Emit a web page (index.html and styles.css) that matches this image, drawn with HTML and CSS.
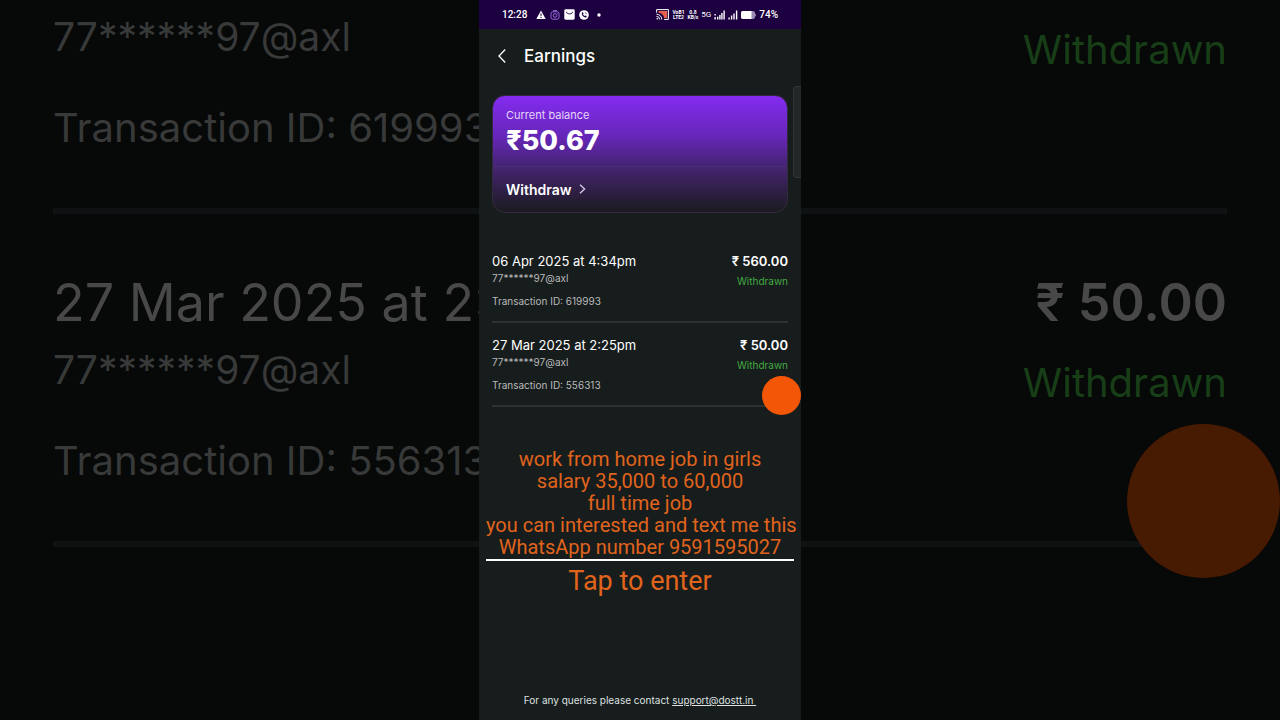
FILE: index.html
```html
<!DOCTYPE html>
<html lang="en">
<head>
  <meta charset="UTF-8">
  <meta name="viewport" content="width=device-width, initial-scale=1.0">
  <title>Earnings</title>
  <link rel="stylesheet" href="styles.css">
</head>
<body>
  <div class="backdrop" aria-hidden="true">
    <ul class="history history-large">
      <li class="entry">
        <div>
          <p class="date">06 Apr 2025 at 4:34pm</p>
          <p class="account">77******97@axl</p>
          <p class="txn">Transaction ID: 619993</p>
        </div>
        <div class="entry-right">
          <p class="sum">₹ 560.00</p>
          <p class="state">Withdrawn</p>
        </div>
      </li>
      <li class="entry">
        <div>
          <p class="date">27 Mar 2025 at 2:25pm</p>
          <p class="account">77******97@axl</p>
          <p class="txn">Transaction ID: 556313</p>
        </div>
        <div class="entry-right">
          <p class="sum">₹ 50.00</p>
          <p class="state">Withdrawn</p>
        </div>
      </li>
    </ul>
    <span class="bubble bubble-large"></span>
  </div>

  <div class="phone">
    <div class="statusbar">
      <span class="clock">12:28</span>
      <div class="status-left">
        <svg width="10" height="10" viewBox="0 0 10 10"><path d="M5 .6 9.700 9H.3z" fill="#fff"/><path d="M5 3.400v2.800M5 7v1" stroke="#1c0040" stroke-width="1"/></svg>
        <svg width="10" height="10" viewBox="0 0 10 10" fill="none" stroke="#9a6be0"><rect x="1" y="1.800" width="8" height="7.400" rx="1.800"/><circle cx="5" cy="5.500" r="1.800"/><path d="M3 .7h4M7.200 3.400h.6"/></svg>
        <svg width="11" height="11" viewBox="0 0 11 11"><rect x=".3" y=".3" width="10.400" height="10.400" rx="1.400" fill="#fff"/><path d="M2.400 2.800c.6 2.800 5.600 2.800 6.200 0" fill="none" stroke="#1c0040"/></svg>
        <svg width="10" height="10" viewBox="0 0 10 10"><circle cx="5" cy="5" r="4.800" fill="#fff"/><path d="M3 2.400c-.8 2.600 1.600 5.200 4.400 5l.2-1.400-1.400-.6-.8.6L4 4.600l.5-.8L4 2.300zM5.600 2.200c1.300.1 2.100.9 2.200 2.200" fill="#1c0040"/></svg>
        <svg width="4" height="4" viewBox="0 0 4 4"><circle cx="2" cy="2" r="1.700" fill="#fff"/></svg>
      </div>
      <div class="status-right">
        <svg width="13" height="11" viewBox="0 0 13 11"><path d="M2.600 2h8.600v7H8C8 6 5.500 4 2.600 4z" fill="#e8604c"/><path d="M.6 3.600V.6h11.800v9.800H8" fill="none" stroke="#fff"/><path d="M.5 5.200a5.300 5.300 0 0 1 5.300 5.300M.5 7.400a3.100 3.100 0 0 1 3.100 3.100" fill="none" stroke="#fff"/><circle cx="1.200" cy="9.800" r=".8" fill="#fff"/></svg>
        <span class="tiny">VoB1<br>LTE2</span>
        <span class="tiny">0.8<br>KB/s</span>
        <span class="net">5G</span>
        <svg width="11" height="10" viewBox="0 0 11 10" fill="#fff"><path d="M.4 4h1.400v1.500H.4zM.4 7h1.400v2.400H.4zM3 6.800h1.400v2.600H3zM5.200 5h1.400v4.400H5.200zM7.200 3h1.400v6.400H7.200zM9.400.6h1.400v8.800H9.400z"/></svg>
        <svg width="10" height="10" viewBox="0 0 10 10" fill="#fff"><path d="M.4 7.600h1.400v1.800H.4zM2.900 5.600h1.400v3.800H2.900zM5.300 3.400h1.400v6H5.300zM7.900.6h1.400v8.800H7.900z"/></svg>
        <svg width="15" height="8" viewBox="0 0 15 8"><rect width="14" height="8" rx="2" fill="#9a8bb0"/><path d="M14 2.500c1.300.3 1.300 2.700 0 3z" fill="#9a8bb0"/><path d="M2 0h8.500v8H2a2 2 0 0 1-2-2V2a2 2 0 0 1 2-2z" fill="#fff"/></svg>
        <span class="clock">74%</span>
      </div>
    </div>

    <header>
      <button class="back" type="button" aria-label="Back">
        <svg width="10" height="16" viewBox="0 0 10 16" fill="none" stroke="#fff" stroke-width="1.300"><path d="M8.200 1.500 2 8l6.200 6.500"/></svg>
      </button>
      <h1>Earnings</h1>
    </header>

    <section class="card">
      <div class="balance">
        <p class="label">Current balance</p>
        <p class="amount">₹50.67</p>
      </div>
      <button class="withdraw" type="button">
        Withdraw
        <svg width="7" height="10" viewBox="0 0 7 10" fill="none" stroke="#d9cbe8" stroke-width="1.300"><path d="m1 .8 4.600 4.200L1 9.200"/></svg>
      </button>
    </section>

    <ul class="history">
      <li class="entry">
        <div>
          <p class="date">06 Apr 2025 at 4:34pm</p>
          <p class="account">77******97@axl</p>
          <p class="txn">Transaction ID: 619993</p>
        </div>
        <div class="entry-right">
          <p class="sum">₹ 560.00</p>
          <p class="state">Withdrawn</p>
        </div>
      </li>
      <li class="entry">
        <div>
          <p class="date">27 Mar 2025 at 2:25pm</p>
          <p class="account">77******97@axl</p>
          <p class="txn">Transaction ID: 556313</p>
        </div>
        <div class="entry-right">
          <p class="sum">₹ 50.00</p>
          <p class="state">Withdrawn</p>
        </div>
      </li>
    </ul>

    <div class="caption">
      <p class="message">work from home job in girls<br>salary 35,000 to 60,000<br>full time job<br>you can interested and text me this<br>WhatsApp number 9591595027</p>
      <button class="enter" type="button">Tap to enter</button>
    </div>

    <footer>For any queries please contact <a href="mailto:support@dostt.in">support@dostt.in&nbsp;</a></footer>

    <span class="edge-panel"></span>
    <span class="bubble"></span>
  </div>
</body>
</html>
```
FILE: styles.css
```css
* {
  box-sizing: border-box;
}
body {
  background-color: #070808;
  color: #fff;
  font-family: Inter, "Noto Sans", sans-serif;
  margin: 0;
}
h1, p, ul {
  margin: 0;
  padding: 0;
}
button {
  background: none;
  border: none;
  padding: 0;
  color: inherit;
  font-family: inherit;
  cursor: pointer;
}
svg {
  display: block;
  flex: none;
}

/* phone screen */
.phone {
  position: relative;
  display: flex;
  flex-direction: column;
  width: 100%;
  max-width: 322px;
  min-height: 100vh;
  margin: 0 auto;
  background-color: #171c1c;
}
.statusbar {
  display: flex;
  align-items: center;
  height: 29px;
  padding: 0 23px;
  background-color: #1c0040;
  font-family: Roboto, sans-serif;
}
.clock {
  font-size: 10px;
  font-weight: 500;
}
.status-left, .status-right {
  display: flex;
  align-items: center;
  gap: 4px;
}
.status-left {
  margin-left: 9px;
}
.status-left svg:last-child {
  margin-left: 4px;
}
.status-right {
  gap: 3px;
  margin-left: auto;
}
.tiny {
  font-size: 5px;
  line-height: 5px;
  font-weight: 700;
  text-align: center;
}
.net {
  font-size: 8px;
}
header {
  display: flex;
  align-items: center;
  gap: 17px;
  height: 53px;
  padding: 0 18px;
}
h1 {
  font-size: 17px;
  font-weight: 500;
}

/* balance card */
.card {
  margin: 13px 13px 0;
  border: 1px solid #33293f;
  border-radius: 13px;
  background: linear-gradient(#842cf0, #6626b8 35%, #43246f 62%, #1c1b20);
}
.balance {
  height: 71px;
  padding: 11px 13px 0;
  border-bottom: 1px solid #4c2f7c;
}
.label {
  color: #e6d5fb;
  font-size: 11px;
  line-height: 16px;
}
.amount {
  font-size: 27px;
  font-weight: 800;
  line-height: 36px;
}
.withdraw {
  display: flex;
  align-items: center;
  gap: 8px;
  height: 44px;
  margin-bottom: 1px;
  padding: 0 13px;
  font-size: 14px;
  font-weight: 600;
}

/* transactions */
.history {
  margin: 26px 13px 0;
  list-style: none;
}
.entry {
  display: flex;
  justify-content: space-between;
  padding: 12px 0;
  border-bottom: 2px solid #2d3131;
  white-space: nowrap;
}
.entry-right {
  text-align: right;
}
.date, .sum {
  font-size: 13px;
  line-height: 20px;
}
.sum {
  font-weight: 600;
}
.account, .txn, .state {
  color: #b9bbbb;
  font-size: 10px;
  line-height: 15px;
}
.txn {
  margin-top: 8px;
}
.state {
  margin-top: 3px;
  color: #43ab43;
}

.caption {
  margin: 41px 7px 0;
  color: #e0641c;
  font-family: Roboto, sans-serif;
  text-align: center;
}
.message {
  padding-bottom: 1px;
  border-bottom: 2px solid #fff;
  font-size: 20px;
  line-height: 22px;
  white-space: nowrap;
}
.enter {
  font-size: 27px;
  line-height: 40px;
}
footer {
  margin-top: auto;
  padding-bottom: 12px;
  color: #dfe1e1;
  font-size: 10px;
  line-height: 16px;
  text-align: center;
}
footer a {
  color: inherit;
}

.bubble {
  position: absolute;
  top: 376px;
  right: 0;
  width: 39px;
  height: 39px;
  border-radius: 50%;
  background-color: #f25606;
}
.edge-panel {
  position: absolute;
  top: 86px;
  right: 0;
  width: 8px;
  height: 92px;
  border: 1px solid #303535;
  border-right: none;
  border-radius: 4px 0 0 4px;
  background-color: #222727;
}

/* enlarged, dimmed copy behind the phone */
.backdrop {
  position: absolute;
  inset: 0;
  overflow: hidden;
}
.history-large {
  margin: -119px 53px 0;
}
.history-large .entry {
  padding: 49px 0 52px;
  border-bottom: 6px solid #0f1212;
}
.history-large .date, .history-large .sum {
  color: #484848;
  font-size: 52px;
  line-height: 80px;
}
.history-large .account, .history-large .txn, .history-large .state {
  color: #383939;
  font-size: 40px;
  line-height: 56px;
}
.history-large .account {
  font-size: 39px;
  line-height: 54px;
}
.history-large .txn {
  margin-top: 36px;
}
.history-large .state {
  margin-top: 12px;
  color: #173e17;
}
.bubble-large {
  top: 424px;
  width: 153px;
  height: 154px;
  background-color: #471a02;
}
```
